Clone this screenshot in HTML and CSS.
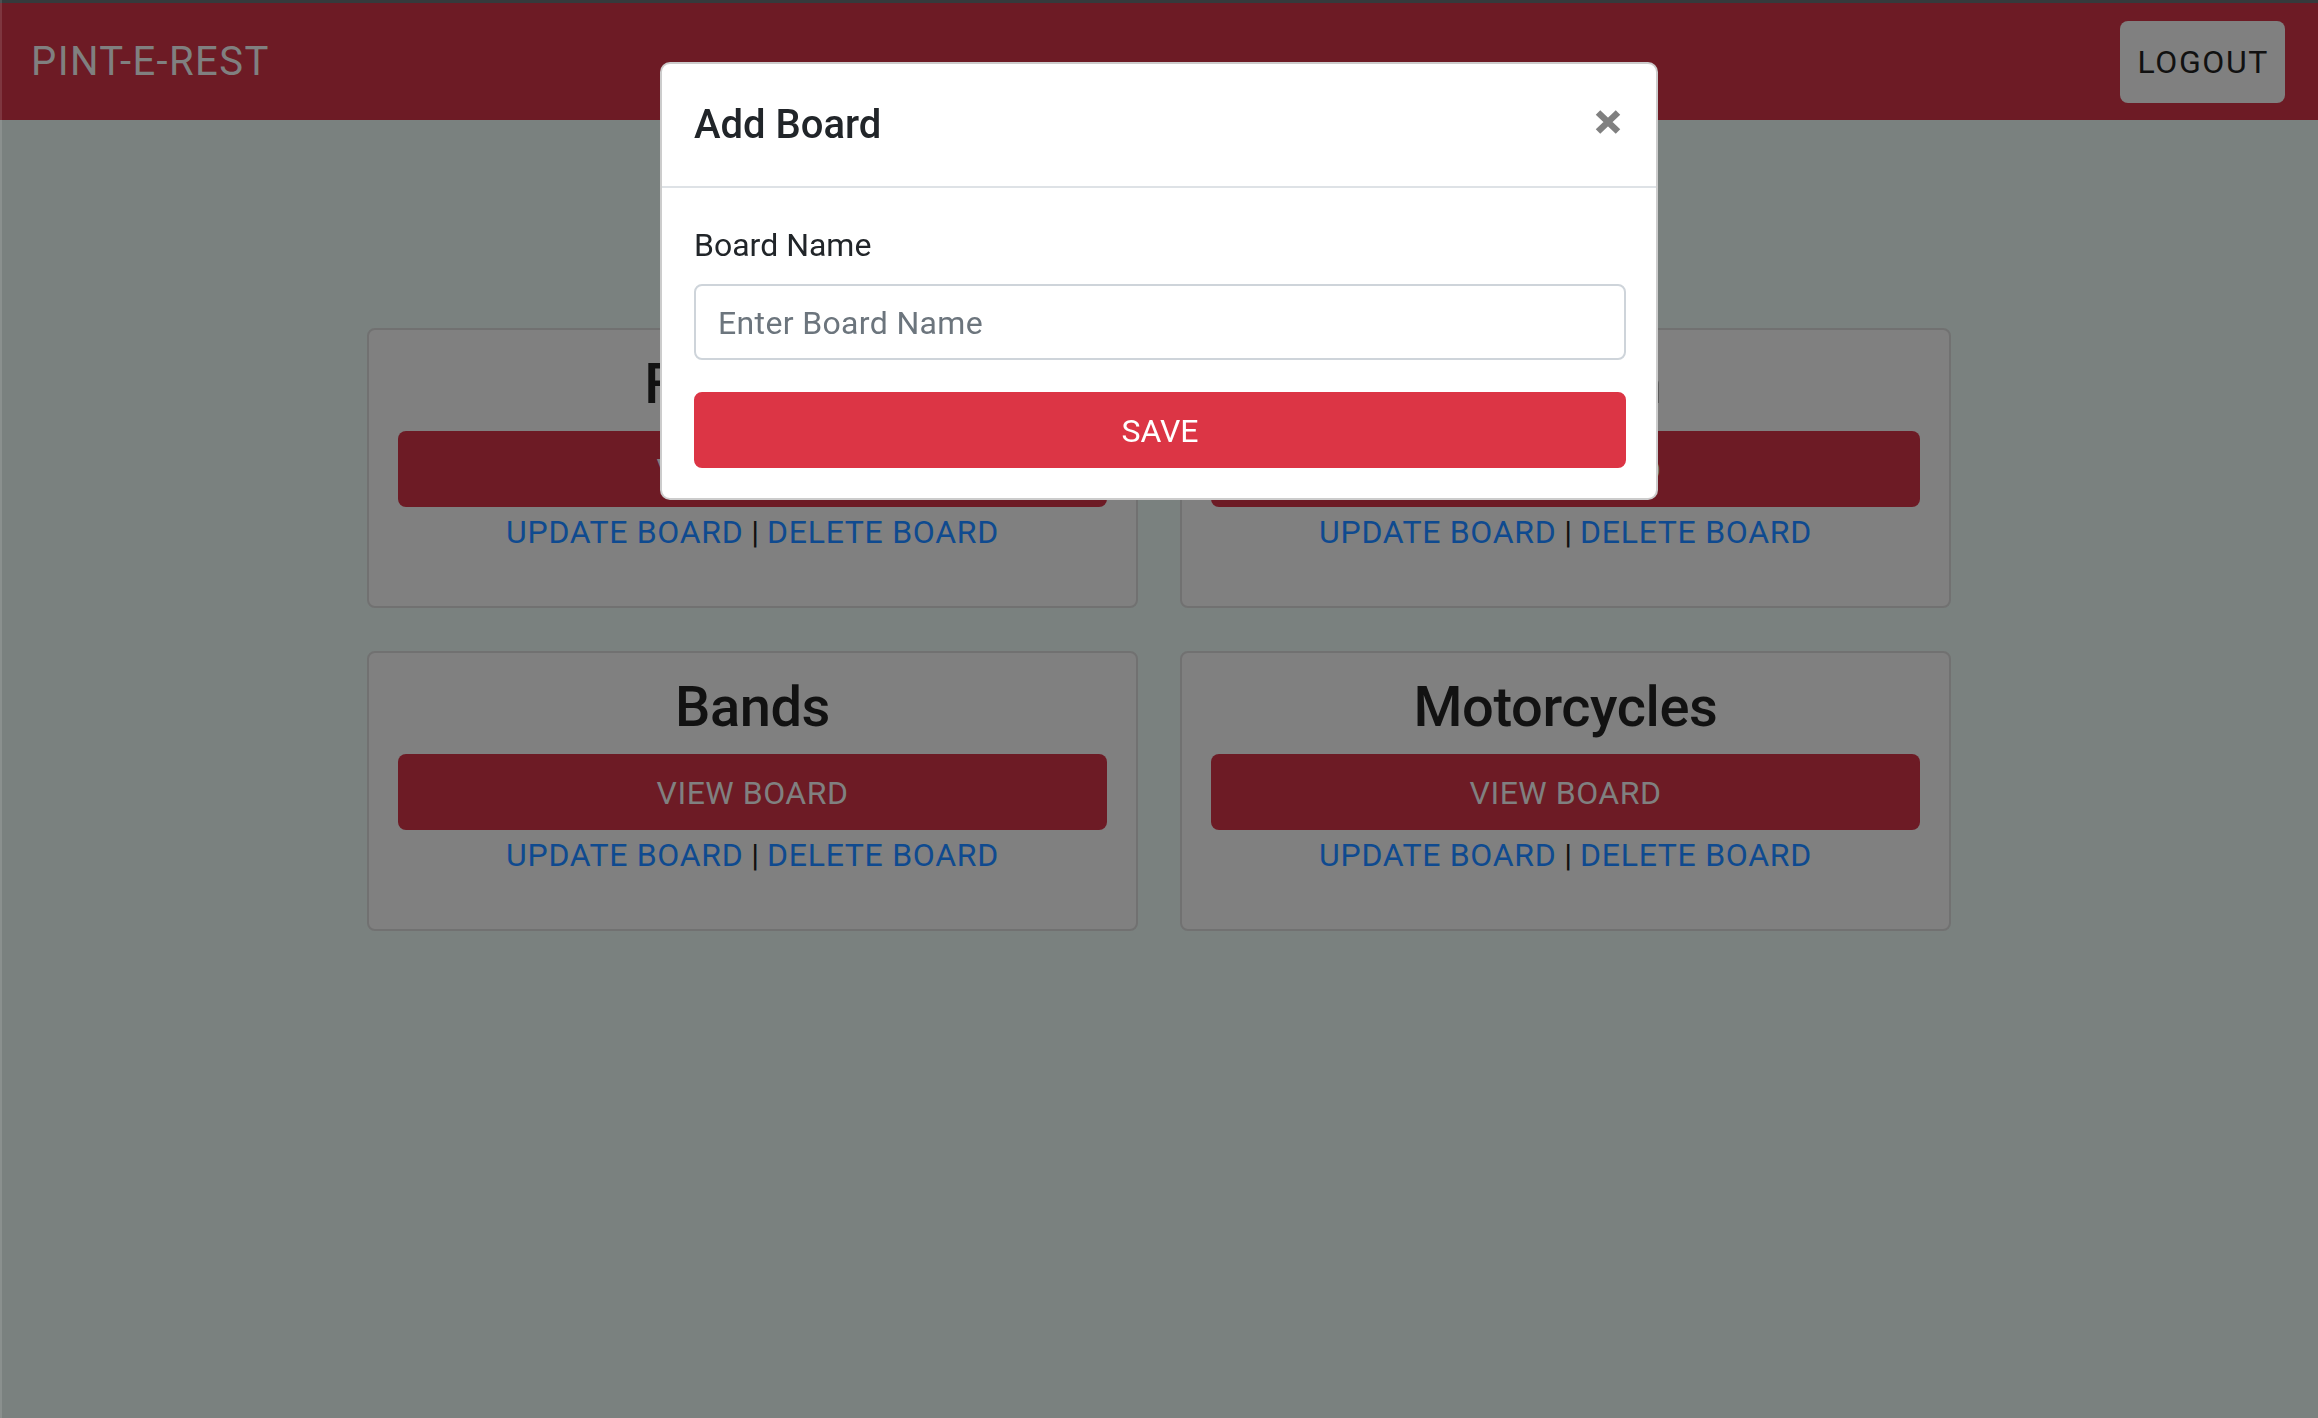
FILE: index.html
```html
<!DOCTYPE html>
<html lang="en">
<head>
<meta charset="utf-8">
<title>Pint-E-Rest</title>
<link rel="stylesheet" href="styles.css">
</head>
<body>
  <nav class="navbar">
    <span class="brand">PINT-E-REST</span>
    <button class="btn-logout" type="button">LOGOUT</button>
  </nav>

  <main class="boards">
    <div class="board-card">
      <h3 class="board-title board-title-tight">Furniture</h3>
      <a class="btn-view" href="#">VIEW BOARD</a>
      <div class="board-links"><a href="#">UPDATE BOARD</a> | <a href="#">DELETE BOARD</a></div>
    </div>
    <div class="board-card">
      <h3 class="board-title board-title-tight">Fashion</h3>
      <a class="btn-view" href="#">VIEW BOARD</a>
      <div class="board-links"><a href="#">UPDATE BOARD</a> | <a href="#">DELETE BOARD</a></div>
    </div>
    <div class="board-card">
      <h3 class="board-title">Bands</h3>
      <a class="btn-view" href="#">VIEW BOARD</a>
      <div class="board-links"><a href="#">UPDATE BOARD</a> | <a href="#">DELETE BOARD</a></div>
    </div>
    <div class="board-card">
      <h3 class="board-title">Motorcycles</h3>
      <a class="btn-view" href="#">VIEW BOARD</a>
      <div class="board-links"><a href="#">UPDATE BOARD</a> | <a href="#">DELETE BOARD</a></div>
    </div>
  </main>

  <div class="modal-layer">
    <div class="modal-dialog">
      <div class="modal-header">
        <h5 class="modal-title">Add Board</h5>
        <button class="close-btn" type="button" aria-label="Close">
          <svg width="26" height="24" viewBox="0 0 26 24"><path d="M3 2.5 L23 21.5 M23 2.5 L3 21.5" stroke="#808080" stroke-width="6.5" fill="none"/></svg>
        </button>
      </div>
      <div class="modal-body">
        <label class="form-label" for="boardName">Board Name</label>
        <input class="form-input" id="boardName" type="text" placeholder="Enter Board Name">
        <button class="btn-save" type="button">SAVE</button>
      </div>
    </div>
  </div>

  <div class="edge"></div>
</body>
</html>
```

FILE: styles.css
```css
* {
  box-sizing: border-box;
}

html,
body {
  margin: 0;
  padding: 0;
}

body {
  font-family: Roboto, "Liberation Sans", Arial, sans-serif;
  background: #7a817f;
  border-top: 3px solid #363a3c;
  min-height: 100vh;
  color: #111;
}

.navbar {
  height: 117px;
  background: #6d1b25;
  display: flex;
  align-items: center;
  justify-content: space-between;
  padding: 0 33px 0 31px;
}

.brand {
  font-size: 40px;
  line-height: 60px;
  letter-spacing: 1.4px;
  color: #808080;
}

.btn-logout {
  font-family: inherit;
  font-size: 32px;
  line-height: 48px;
  letter-spacing: 1.6px;
  padding: 17px 16px 17px 18px;
  background: #808080;
  color: #111;
  border: none;
  border-radius: 8px;
}

.boards {
  width: 1584px;
  margin: 208px auto 0;
  display: grid;
  grid-template-columns: 1fr 1fr;
  column-gap: 42px;
  row-gap: 43px;
}

.board-card {
  background: #808080;
  border: 2px solid #717171;
  border-radius: 8px;
  padding: 22px 29px 50px;
  text-align: center;
}

.board-title {
  margin: 0 0 15px;
  font-size: 56px;
  line-height: 64px;
  font-weight: 500;
  letter-spacing: -0.4px;
  color: #121212;
}

.board-title-tight {
  letter-spacing: -1px;
}

.btn-view {
  display: block;
  background: #6d1b25;
  color: #808080;
  font-size: 32px;
  line-height: 48px;
  letter-spacing: 0.5px;
  padding: 15px 14px 13px;
  border-radius: 8px;
  text-decoration: none;
}

.board-links {
  font-size: 32px;
  line-height: 48px;
  padding-top: 1px;
  color: #111;
}

.board-links a {
  color: #0f4a8f;
  letter-spacing: 0.7px;
  text-decoration: none;
}

.modal-layer {
  position: fixed;
  inset: 0;
}

.modal-dialog {
  width: 998px;
  margin: 62px auto 0;
  background: #fff;
  border: 2px solid rgba(0, 0, 0, 0.2);
  border-radius: 10px;
}

.modal-header {
  display: flex;
  justify-content: space-between;
  align-items: flex-start;
  padding: 31px 30px 31px 32px;
  border-bottom: 2px solid #dee2e6;
}

.modal-title {
  margin: 0;
  font-size: 40px;
  line-height: 60px;
  font-weight: 500;
  color: #212529;
}

.close-btn {
  display: block;
  background: none;
  border: none;
  padding: 0;
  margin: 15px 5px 0 0;
  width: 26px;
  height: 24px;
}

.close-btn svg {
  display: block;
  overflow: visible;
}

.modal-body {
  padding: 33px 30px 30px 32px;
}

.form-label {
  display: block;
  font-size: 32px;
  line-height: 48px;
  color: #212529;
  margin-bottom: 15px;
}

.form-input {
  display: block;
  width: 100%;
  height: 76px;
  padding: 13px 22px 11px;
  font-family: inherit;
  font-size: 32px;
  line-height: 48px;
  letter-spacing: 0.35px;
  color: #495057;
  border: 2px solid #ced4da;
  border-radius: 8px;
  margin: 0 0 32px;
  outline: none;
}

.form-input::placeholder {
  color: #6c757d;
  opacity: 1;
}

.btn-save {
  display: block;
  width: 100%;
  background: #dc3545;
  border: 2px solid #dc3545;
  color: #fff;
  font-family: inherit;
  font-size: 32px;
  line-height: 48px;
  padding: 13px 12px 11px;
  border-radius: 8px;
}

.edge {
  position: fixed;
  left: 0;
  top: 0;
  bottom: 0;
  width: 2px;
  background: rgba(255, 255, 255, 0.12);
}
```
